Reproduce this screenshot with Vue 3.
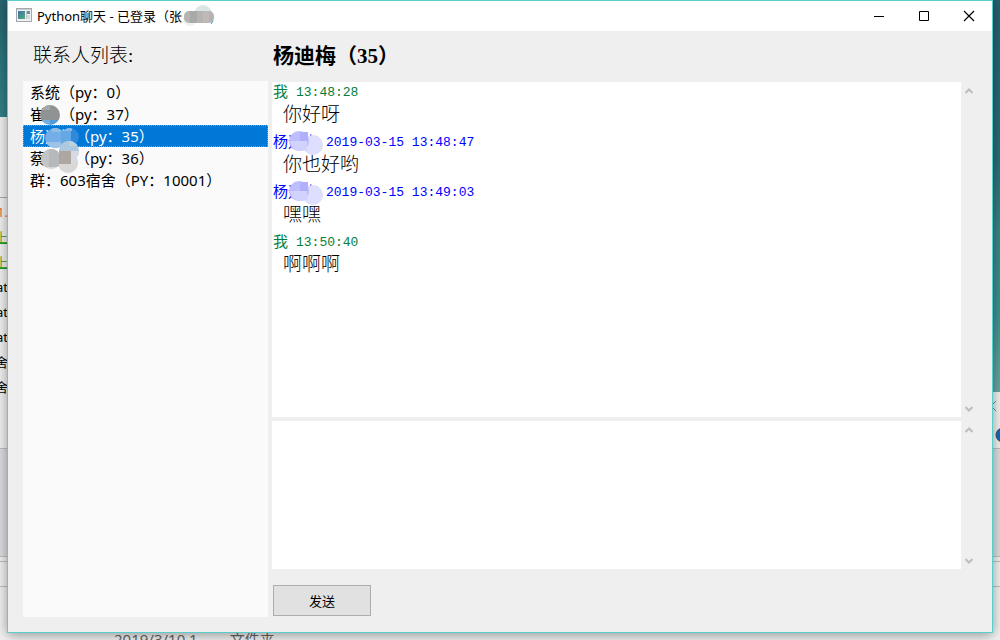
<script setup>
import { ref } from 'vue'

const contacts = [
  { name: '系统', tail: '（py：0）', mask: null },
  { name: '崔', tail: '（py：37）', mask: 'one' },
  { name: '杨迪梅', tail: '（py：35）', mask: 'two' },
  { name: '蔡', tail: '（py：36）', mask: 'three' },
  { name: '群：603宿舍', tail: '（PY：10001）', mask: null }
]
const selected = ref(2)

const messages = [
  { mine: true, name: '我', time: '13:48:28', text: '你好呀' },
  { mine: false, name: '杨迪梅', time: '2019-03-15 13:48:47', text: '你也好哟' },
  { mine: false, name: '杨迪梅', time: '2019-03-15 13:49:03', text: '嘿嘿' },
  { mine: true, name: '我', time: '13:50:40', text: '啊啊啊' }
]
const draft = ref('')
</script>

<template>
  <div class="desktop">
    <div class="strip left" aria-hidden="true">
      <div class="sea"></div>
      <div class="peek">
        <span class="orange">1.</span>
        <span class="green">上</span>
        <span class="green">上</span>
        <span>at</span>
        <span>at</span>
        <span>at</span>
        <span>舍</span>
        <span>舍</span>
      </div>
      <div class="pane"></div>
      <div class="line"></div>
    </div>
    <div class="strip right" aria-hidden="true">
      <div class="sea"></div>
      <svg class="badge" width="8" height="60" viewBox="0 0 8 60">
        <path d="M4 9L-1 14L4 19" fill="none" stroke="#888" />
        <circle cx="11" cy="43" r="7" fill="#0c6abf" stroke="#35506c" />
      </svg>
      <div class="pane"></div>
      <div class="line"></div>
    </div>
    <div class="behind" aria-hidden="true"><span>2019/3/10 1</span><span>文件夹</span></div>

    <main class="window">
      <header class="titlebar">
        <svg class="appicon" width="16" height="14" viewBox="0 0 16 14">
          <defs>
            <linearGradient id="scr" x1="0" y1="0" x2="1" y2="1">
              <stop offset="0" stop-color="#3c70a8" />
              <stop offset="1" stop-color="#5cab78" />
            </linearGradient>
          </defs>
          <rect x=".5" y=".5" width="15" height="13" fill="#eef0f3" stroke="#a3a8ae" />
          <rect x="1" y="1" width="14" height="1" fill="#c9cfd6" />
          <rect x="2" y="3" width="7" height="8" fill="url(#scr)" />
          <rect x="10" y="3" width="1" height="8" fill="#bcc5cd" />
          <rect x="11" y="3" width="3" height="3" fill="#728b9e" />
          <rect x="11" y="7" width="3" height="4" fill="#d3dae0" />
        </svg>
        <h1>Python聊天 - 已登录（张<span class="masked">
          <svg class="blob title-blob" width="34" height="24" viewBox="0 0 34 24">
            <circle cx="8" cy="15" r="7" fill="#edf1f1" />
            <circle cx="21" cy="10" r="9" fill="#dae5e4" />
            <rect x="2" y="7" width="30" height="12" rx="5" fill="#b5b4b2" />
            <path d="M8 7h7v12H8z" fill="#a9a9a9" />
            <path d="M21 7h6v12h-6z" fill="#bdbab7" />
            <path d="M31 17l-2 3" stroke="#3d9bd0" />
          </svg>
        </span></h1>
        <div class="controls">
          <button type="button" aria-label="最小化">
            <svg width="12" height="12" viewBox="0 0 12 12"><path d="M1 6.5h10" stroke="#000" /></svg>
          </button>
          <button type="button" aria-label="最大化">
            <svg width="12" height="12" viewBox="0 0 12 12"><path d="M1.5 1.5h9v9h-9z" fill="none" stroke="#000" /></svg>
          </button>
          <button type="button" aria-label="关闭">
            <svg width="12" height="12" viewBox="0 0 12 12"><path d="M1 1l10 10M11 1L1 11" stroke="#000" stroke-width="1.2" /></svg>
          </button>
        </div>
      </header>

      <div class="body">
        <section class="side">
          <h2>联系人列表:</h2>
          <div class="contacts">
            <button
              v-for="(c, i) in contacts"
              :key="i"
              type="button"
              :class="['contact', { active: selected === i }]"
              @click="selected = i"
            >
              <span>{{ c.name }}</span><span v-if="c.mask === 'one'" class="gap1"></span><span v-if="c.mask === 'three'" class="gap2"></span><span>{{ c.tail }}</span>
              <svg v-if="c.mask === 'one'" class="blob list-blob" width="60" height="26" viewBox="0 0 60 26">
                <clipPath id="c1"><circle cx="27" cy="12" r="10" /></clipPath>
                <g clip-path="url(#c1)">
                  <path d="M17 2h20v15H17z" fill="#8f9393" />
                  <path d="M17 2h10v5H17z" fill="#a5a8a8" />
                  <path d="M17 17h10v6H17z" fill="#72aee0" />
                  <path d="M27 17h10v6H27z" fill="#5399d6" />
                </g>
              </svg>
              <svg v-if="c.mask === 'two'" class="blob list-blob" width="60" height="26" viewBox="0 0 60 26">
                <clipPath id="c2"><circle cx="32" cy="13" r="10" /><circle cx="47" cy="12" r="9" /></clipPath>
                <g clip-path="url(#c2)">
                  <path d="M20 0h20v26H20z" fill="#74aee8" />
                  <path d="M29 0h9v7h-9z" fill="#91bce3" />
                  <path d="M20 17h20v9H20z" fill="#9bc3e8" />
                  <path d="M38 0h10v26H38z" fill="#64a8e6" />
                  <path d="M48 0h9v26h-9z" fill="#2e88dc" />
                  <path d="M40 0h9v6h-9z" fill="#8ab9e4" />
                </g>
              </svg>
              <svg v-if="c.mask === 'three'" class="blob third-blob" width="60" height="34" viewBox="0 0 60 34">
                <clipPath id="c3"><circle cx="28" cy="19" r="10" /><circle cx="46" cy="11" r="10" /><circle cx="45" cy="23" r="10" /></clipPath>
                <g clip-path="url(#c3)">
                  <path d="M16 0h42v34H16z" fill="#d9d7d6" />
                  <path d="M16 9h10v18H16z" fill="#c3c4c5" />
                  <path d="M26 9h10v18H26z" fill="#b7b8b9" />
                  <path d="M36 0h20v12H36z" fill="#aec8de" />
                  <path d="M46 0h10v6H46z" fill="#bdd1df" />
                  <path d="M36 11h12v13H36z" fill="#aea6a1" />
                  <path d="M48 11h10v13H48z" fill="#d5dbe0" />
                </g>
              </svg>
            </button>
          </div>
        </section>

        <section class="talk">
          <h2>杨迪梅（35）</h2>
          <div class="box log">
            <div class="content">
              <article v-for="(m, i) in messages" :key="i">
                <p :class="['meta', m.mine ? 'mine' : 'theirs']">
                  <span>{{ m.name }}</span><time>{{ m.time }}</time>
                  <svg v-if="!m.mine" class="blob msg-blob" width="40" height="26" viewBox="0 0 40 26">
                    <circle cx="29" cy="15" r="10" fill="#dedeff" />
                    <circle cx="15" cy="11" r="10" fill="#bdbdff" />
                    <path d="M6 11h17v9q-9 3-15-3z" fill="#d2d2ff" />
                    <path d="M16 2h8v9h-8z" fill="#afaffc" />
                  </svg>
                </p>
                <p class="text">{{ m.text }}</p>
              </article>
            </div>
            <div class="scroll">
              <button type="button" aria-label="向上滚动"><svg width="8" height="6" viewBox="0 0 8 6"><path d="M.5 5L4 1.5L7.5 5" /></svg></button>
              <button type="button" aria-label="向下滚动"><svg width="8" height="6" viewBox="0 0 8 6"><path d="M.5 1L4 4.5L7.5 1" /></svg></button>
            </div>
          </div>
          <div class="box composer">
            <textarea v-model="draft" class="content" aria-label="消息"></textarea>
            <div class="scroll">
              <button type="button" aria-label="向上滚动"><svg width="8" height="6" viewBox="0 0 8 6"><path d="M.5 5L4 1.5L7.5 5" /></svg></button>
              <button type="button" aria-label="向下滚动"><svg width="8" height="6" viewBox="0 0 8 6"><path d="M.5 1L4 4.5L7.5 1" /></svg></button>
            </div>
          </div>
          <button type="button" class="send">发送</button>
        </section>
      </div>
    </main>
  </div>
</template>

<style>
body {
  margin: 0;
}
</style>

<style scoped>
* {
  box-sizing: border-box;
}
h1,
h2,
p {
  margin: 0;
  font-weight: 400;
}
button {
  border: 0;
  padding: 0;
  background: none;
  color: inherit;
  font: inherit;
}
.desktop {
  position: relative;
  display: flex;
  min-height: 100vh;
  overflow: hidden;
  padding: 0 7px 7px;
  background: #f2f2f2;
  color: #000;
  font-family: "Noto Sans", "Noto Sans CJK SC", sans-serif;
}
.strip {
  position: absolute;
  top: 0;
  bottom: 0;
  width: 8px;
  overflow: hidden;
}
.left {
  left: 0;
}
.right {
  right: 0;
}
.left .sea {
  height: 117px;
  background: linear-gradient(#27636f, #2c7880 60%, #338287);
}
.right .sea {
  height: 392px;
  background: linear-gradient(#285f71, #2b6c78 40%, #3a8689 60%, #3d9390 80%, #6ba5a6);
}
.peek {
  position: absolute;
  top: 197px;
  left: 0;
  width: 8px;
  border-top: 1px solid #aaa;
  padding-top: 2px;
  display: flex;
  flex-direction: column;
  align-items: flex-end;
  font-size: 13px;
  line-height: 25px;
}
.peek .orange {
  color: #f0683c;
}
.peek .green {
  color: #58a81c;
  text-decoration: underline;
  text-decoration-color: #12a03c;
}
.strip .pane {
  position: absolute;
  top: 448px;
  width: 8px;
  height: 109px;
  border: solid #c0c0c0;
  border-width: 1px 0;
  background: #dedfe2;
}
.strip .line {
  position: absolute;
  top: 561px;
  width: 8px;
  height: 26px;
  border: solid #c0c0c0;
  border-width: 1px 0;
}
.badge {
  position: absolute;
  top: 392px;
  left: 0;
}
.behind {
  position: absolute;
  top: 629px;
  left: 114px;
  display: flex;
  gap: 32px;
  color: #666;
  font-size: 15px;
  line-height: 20px;
}
.window {
  position: relative;
  flex: 1;
  display: flex;
  flex-direction: column;
  border: 1px solid #59cfcb;
  background: #efefef;
  box-shadow: 0 2px 12px rgba(0, 0, 0, 0.4);
}
.titlebar {
  display: flex;
  align-items: center;
  height: 30px;
  padding-left: 8px;
  background: #fff;
}
.appicon {
  flex: none;
  margin-bottom: 2px;
}
h1 {
  flex: 1;
  padding-left: 5px;
  font-size: 13px;
  line-height: 30px;
  white-space: nowrap;
}
.masked {
  position: relative;
}
.blob {
  position: absolute;
}
.title-blob {
  left: 0;
  top: -3px;
}
.controls {
  display: flex;
  padding-right: 1px;
}
.controls button {
  display: grid;
  place-items: center;
  width: 45px;
  height: 28px;
}
.body {
  flex: 1;
  display: grid;
  grid-template-columns: 245px 1fr;
  gap: 4px;
  padding: 0 15px 15px;
}
.side,
.talk {
  display: flex;
  flex-direction: column;
  min-width: 0;
}
.side h2 {
  height: 50px;
  padding-left: 10px;
  font-family: "Liberation Serif", "Noto Sans CJK SC", serif;
  font-size: 19px;
  font-weight: 300;
  line-height: 50px;
}
.contacts {
  flex: 1;
  background: #fafafa;
}
.contact {
  position: relative;
  display: flex;
  align-items: center;
  width: 100%;
  height: 22px;
  padding-left: 7px;
  font-size: 15px;
  line-height: 22px;
  white-space: nowrap;
}
.contact.active {
  background: #0078d7;
  color: #fff;
  outline: 1px dotted #e88c3c;
  outline-offset: -1px;
}
.gap1 {
  width: 15px;
}
.gap2 {
  width: 30px;
}
.list-blob {
  left: 0;
  top: 0;
}
.third-blob {
  left: 0;
  top: -7px;
  z-index: 1;
}
.talk h2 {
  height: 51px;
  padding-left: 1px;
  font-family: "Liberation Serif", "Noto Sans CJK SC", serif;
  font-size: 21px;
  font-weight: 700;
  line-height: 51px;
}
.box {
  display: flex;
}
.log {
  flex: 1;
}
.composer {
  height: 148px;
  margin-top: 4px;
}
.content {
  flex: 1;
  min-width: 0;
  background: #fff;
}
textarea {
  border: 0;
  resize: none;
  outline: 0;
  font: 19px "Noto Sans CJK SC", sans-serif;
}
.scroll {
  display: flex;
  flex-direction: column;
  justify-content: space-between;
  width: 16px;
}
.scroll button {
  display: grid;
  place-items: center;
  width: 15px;
  height: 17px;
}
.scroll path {
  fill: none;
  stroke: #bdbdbd;
  stroke-width: 2;
}
article {
  height: 50px;
}
.meta {
  position: relative;
  display: flex;
  align-items: flex-start;
  gap: 8px;
  height: 20px;
  padding-left: 1px;
  font-family: "Noto Sans CJK SC", sans-serif;
  font-size: 15px;
  font-weight: 400;
  line-height: 18px;
}
.meta time {
  font-family: "Liberation Mono", monospace;
  font-size: 13px;
  line-height: 22px;
}
.mine {
  color: #008040;
}
.theirs {
  color: #0000ff;
}
.msg-blob {
  left: 12px;
  top: -2px;
}
.text {
  padding-left: 11px;
  font-family: "Noto Sans CJK SC", sans-serif;
  font-size: 19px;
  font-weight: 300;
  line-height: 22px;
}
.send {
  width: 98px;
  height: 31px;
  margin: 16px 0 1px 1px;
  border: 1px solid #adadad;
  background: #e1e1e1;
  font-size: 13px;
}
</style>
